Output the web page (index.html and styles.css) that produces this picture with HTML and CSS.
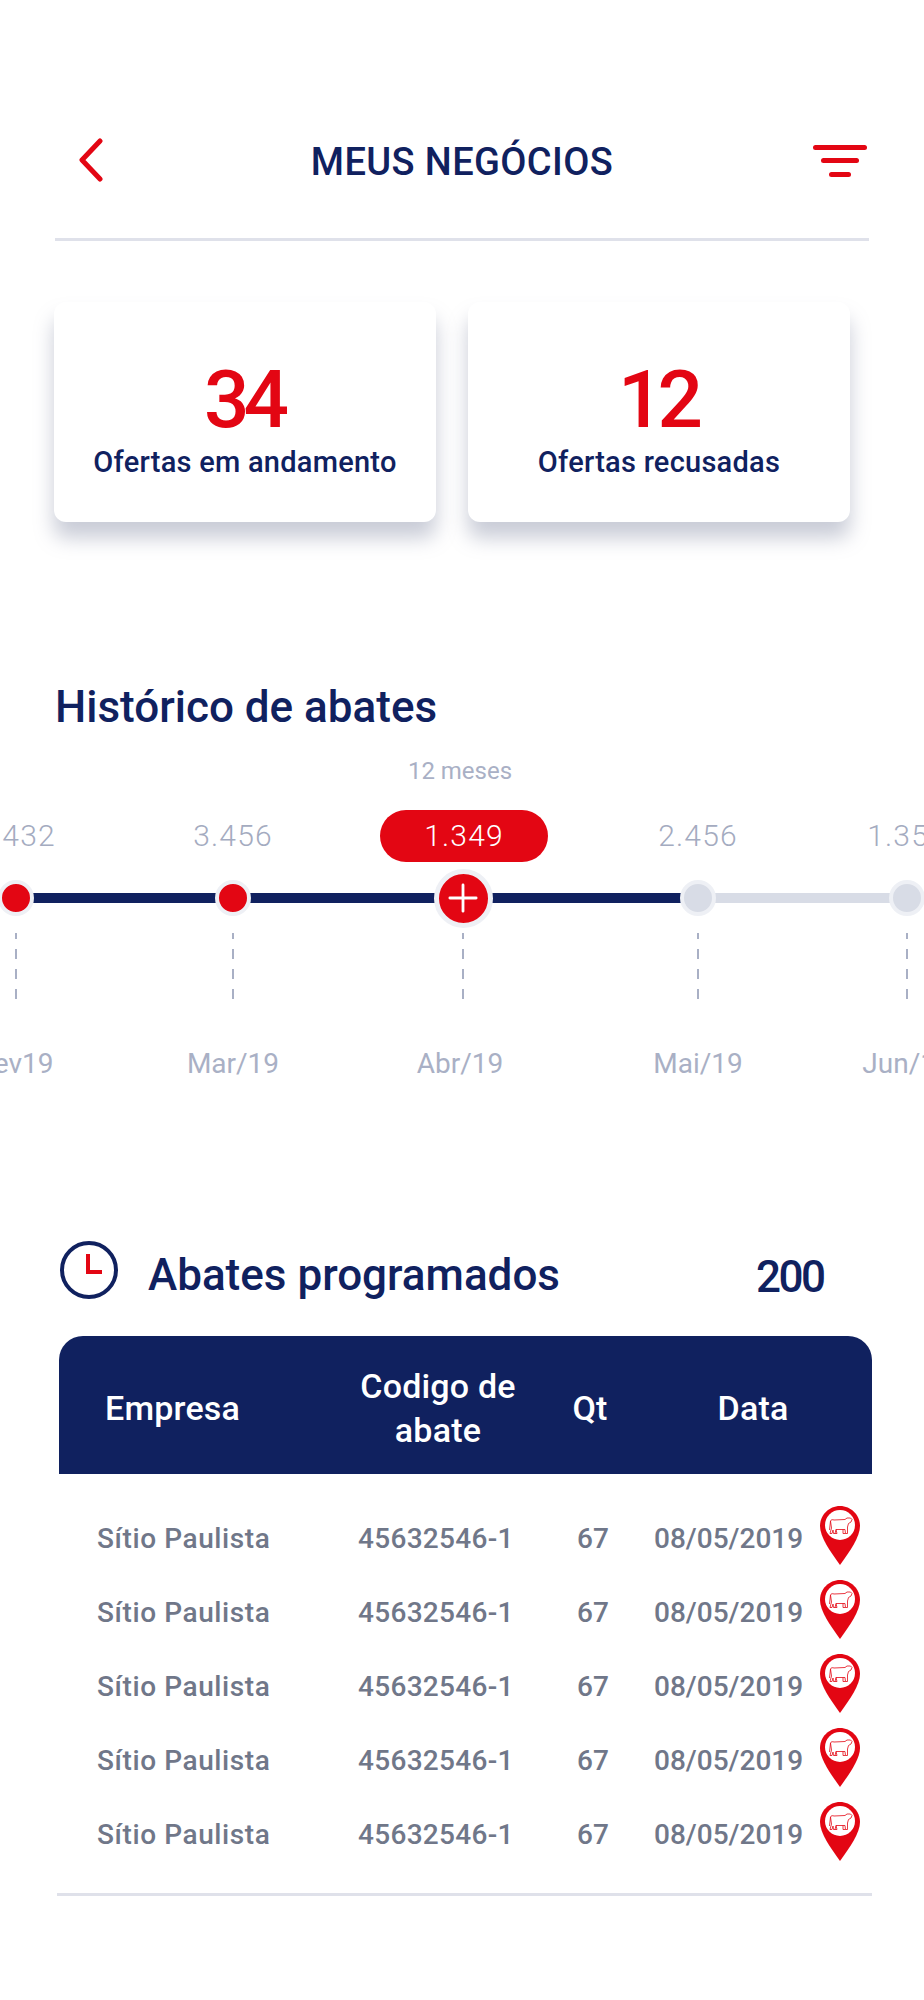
FILE: index.html
```html
<!DOCTYPE html>
<html>
    <head>
        <title>Meus negócios</title>
        <meta charset="utf-8">
        <link rel="stylesheet" href="styles.css">
    </head>
    <body>
        <div class="page">
            <div class="topbar">
                <svg class="back" viewBox="0 0 24 44"><path d="M21 3 L3 22 L21 41" /></svg>
                <div class="topbar-title">MEUS NEGÓCIOS</div>
                <svg class="filter" viewBox="0 0 54 33">
                    <rect x="0" y="0" width="54" height="5" rx="2.5" />
                    <rect x="8" y="13" width="38" height="5" rx="2.5" />
                    <rect x="16" y="27" width="22" height="5" rx="2.5" />
                </svg>
            </div>

            <div class="cards">
                <div class="card">
                    <div class="card-num">34</div>
                    <div class="card-label">Ofertas em andamento</div>
                </div>
                <div class="card">
                    <div class="card-num">12</div>
                    <div class="card-label">Ofertas recusadas</div>
                </div>
            </div>

            <h2 class="hist-title">Histórico de abates</h2>
            <div class="hist-sub">12 meses</div>

            <div class="timeline">
                <div class="stop done">
                    <div class="value">3.432</div>
                    <div class="node"><span class="dot"></span></div>
                    <div class="dash"></div>
                    <div class="month">Fev19</div>
                </div>
                <div class="stop done">
                    <div class="value">3.456</div>
                    <div class="node"><span class="dot"></span></div>
                    <div class="dash"></div>
                    <div class="month">Mar/19</div>
                </div>
                <div class="stop done current">
                    <div class="value"><span class="pill">1.349</span></div>
                    <div class="node">
                        <span class="dot big">
                            <svg viewBox="0 0 32 32"><path d="M2 16 H30 M16 2 V30" /></svg>
                        </span>
                    </div>
                    <div class="dash"></div>
                    <div class="month">Abr/19</div>
                </div>
                <div class="stop half">
                    <div class="value">2.456</div>
                    <div class="node"><span class="dot off"></span></div>
                    <div class="dash"></div>
                    <div class="month">Mai/19</div>
                </div>
                <div class="stop todo">
                    <div class="value">1.356</div>
                    <div class="node"><span class="dot off"></span></div>
                    <div class="dash"></div>
                    <div class="month">Jun/19</div>
                </div>
            </div>

            <div class="prog-head">
                <svg class="clock" viewBox="0 0 58 58">
                    <circle cx="29" cy="29" r="27" />
                    <path d="M28 13 V31 H42" />
                </svg>
                <div class="prog-title">Abates programados</div>
                <div class="prog-total">200</div>
            </div>

            <div class="table-head">
                <div>Empresa</div>
                <div class="center">Codigo de<br>abate</div>
                <div class="center">Qt</div>
                <div class="center">Data</div>
            </div>

            <div class="rows">
                <div class="row">
                    <div class="firm">Sítio Paulista</div><div class="code">45632546-1</div><div>67</div><div>08/05/2019</div>
                    <svg class="pin" viewBox="0 0 40 59"><use href="#pin" /></svg>
                </div>
                <div class="row">
                    <div class="firm">Sítio Paulista</div><div class="code">45632546-1</div><div>67</div><div>08/05/2019</div>
                    <svg class="pin" viewBox="0 0 40 59"><use href="#pin" /></svg>
                </div>
                <div class="row">
                    <div class="firm">Sítio Paulista</div><div class="code">45632546-1</div><div>67</div><div>08/05/2019</div>
                    <svg class="pin" viewBox="0 0 40 59"><use href="#pin" /></svg>
                </div>
                <div class="row">
                    <div class="firm">Sítio Paulista</div><div class="code">45632546-1</div><div>67</div><div>08/05/2019</div>
                    <svg class="pin" viewBox="0 0 40 59"><use href="#pin" /></svg>
                </div>
                <div class="row">
                    <div class="firm">Sítio Paulista</div><div class="code">45632546-1</div><div>67</div><div>08/05/2019</div>
                    <svg class="pin" viewBox="0 0 40 59"><use href="#pin" /></svg>
                </div>
            </div>
            <div class="bottom-rule"></div>
        </div>

        <!-- map pin with the cow, used by every row -->
        <svg class="defs" width="0" height="0">
            <symbol id="pin" viewBox="0 0 40 59">
                <path fill="#e30613" d="M20 0 C31 0 40 9 40 20 C40 31 30 45 20 59 C10 45 0 31 0 20 C0 9 9 0 20 0 Z" />
                <circle fill="#fff" cx="20" cy="19" r="15" />
                <path fill="none" stroke="#e30613" stroke-width="0.8" stroke-linejoin="round"
                    d="M10.500 15 C11 13.500 12.500 13.500 14 14 L25 13.500 L27 12 L30.500 12 L32 13.500 L31 16 L28.500 17.500 L27.500 21 L27.500 27.500 L25.500 27.500 L25 23.500 L16 23.500 L15 27.500 L13.500 27.500 L13 24 L12 27.500 L10 27.500 L11.500 22 Z M10.500 15 L9.500 24 M23 23.500 L23 27.500 L25.500 27.500 M16 23.500 L17 27.500 L15 27.500" />
            </symbol>
        </svg>
    </body>
</html>
```

FILE: styles.css
```css
body {
    margin: 0;
    background-color: #fff;
    font-family: "Roboto", "Liberation Sans", sans-serif;
    font-weight: 500;
}
.page {
    width: 924px;
    height: 2000px;
    overflow: hidden;
}
.defs {
    display: block;
}

/* top bar */
.topbar {
    display: flex;
    justify-content: space-between;
    align-items: flex-start;
    margin: 138px 55px 0 55px;
    padding: 0 2px 0 24px;
    height: 100px;
    border-bottom: 3px solid #dfe1ea;
}
.back {
    width: 24px;
    height: 44px;
    fill: none;
    stroke: #e30613;
    stroke-width: 5;
    stroke-linecap: round;
    stroke-linejoin: round;
}
.topbar-title {
    color: #10215f;
    font-size: 38px;
    line-height: 44px;
    letter-spacing: 0.4px;
    margin: 2px 0 0 8px;
}
.filter {
    width: 54px;
    height: 33px;
    margin-top: 7px;
    fill: #e30613;
}

/* cards */
.cards {
    display: flex;
    gap: 32px;
    margin: 61px 0 0 54px;
}
.card {
    width: 382px;
    height: 220px;
    box-sizing: border-box;
    padding-top: 58px;
    border-radius: 12px;
    background-color: #fff;
    text-align: center;
    box-shadow: 0 16px 20px rgba(120, 128, 155, 0.4);
}
.card-num {
    color: #e30613;
    font-size: 80px;
    line-height: 80px;
    letter-spacing: -6px;
    padding-right: 3px;
}
.card-label {
    color: #10215f;
    font-size: 29px;
    line-height: 34px;
    letter-spacing: 0.25px;
    margin-top: 5px;
}

/* historico */
.hist-title {
    color: #10215f;
    font-size: 44px;
    font-weight: 500;
    line-height: 50px;
    margin: 160px 0 0 55px;
}
.hist-sub {
    color: #a9b0c5;
    font-size: 24px;
    font-weight: 400;
    line-height: 28px;
    text-align: center;
    margin: 25px 0 0 -4px;
}
.timeline {
    display: grid;
    grid-template-columns: 200px 234px 226px 244px 174px;
    margin: 25px 0 0 -84px;
    width: 1008px;
}
.stop {
    display: flex;
    flex-direction: column;
    align-items: center;
}
.value {
    height: 52px;
    color: #a4abc0;
    font-size: 30px;
    font-weight: 300;
    line-height: 52px;
    letter-spacing: 1.2px;
}
.pill {
    display: block;
    width: 168px;
    height: 52px;
    margin-left: 2px;
    border-radius: 26px;
    background-color: #e30613;
    color: #fff;
    text-align: center;
}
.node {
    align-self: stretch;
    height: 58px;
    margin-top: 7px;
    display: flex;
    align-items: center;
    justify-content: center;
    background-position: center;
    background-size: 100% 10px;
    background-repeat: no-repeat;
}
.done .node {
    background-image: linear-gradient(#10215f, #10215f);
}
.half .node {
    background-image: linear-gradient(to right, #10215f 50%, #d8dce6 50%);
}
.todo .node {
    background-image: linear-gradient(#d8dce6, #d8dce6);
}
.dot {
    display: flex;
    align-items: center;
    justify-content: center;
    width: 28px;
    height: 28px;
    border: 4px solid #eef0f5;
    border-radius: 50%;
    background-color: #e30613;
}
.dot.off {
    background-color: #d8dce6;
}
.dot.big {
    width: 49px;
    height: 49px;
    border-width: 5px;
}
.dot.big svg {
    width: 30px;
    height: 30px;
    fill: none;
    stroke: #fff;
    stroke-width: 3;
    stroke-linecap: round;
}
.dash {
    width: 2px;
    height: 67px;
    margin-top: 6px;
    background-image: linear-gradient(#a9b0c5 50%, transparent 50%);
    background-size: 2px 20px;
    background-position: 0 -4px;
}
.month {
    color: #a9b0c5;
    font-size: 28px;
    font-weight: 400;
    line-height: 36px;
    margin-top: 46px;
}
.current .month {
    margin-right: 6px;
}

/* abates programados */
.prog-head {
    display: flex;
    align-items: center;
    margin: 158px 0 0 60px;
    height: 60px;
}
.clock {
    width: 58px;
    height: 58px;
    fill: none;
    stroke: #10215f;
    stroke-width: 4;
}
.clock path {
    stroke: #e30613;
}
.prog-title {
    width: 608px;
    margin-left: 30px;
    padding-top: 10px;
    color: #10215f;
    font-size: 44px;
}
.prog-total {
    padding-top: 14px;
    color: #10215f;
    font-size: 44px;
    letter-spacing: -2.5px;
}
.table-head {
    display: grid;
    grid-template-columns: 233px 200px 104px 222px;
    align-items: center;
    box-sizing: border-box;
    width: 813px;
    height: 138px;
    margin: 36px 0 0 59px;
    padding: 6px 0 0 46px;
    border-radius: 24px 24px 0 0;
    background-color: #10215f;
    color: #fff;
    font-size: 34px;
    line-height: 44px;
    letter-spacing: 0.2px;
}
.center {
    text-align: center;
}
.rows {
    margin: 27px 0 0 97px;
}
.row {
    display: grid;
    grid-template-columns: 261px 219px 77px 166px 40px;
    align-items: center;
    height: 74px;
    color: #707789;
    font-size: 28px;
}
.firm {
    letter-spacing: 0.6px;
}
.code {
    letter-spacing: 0.3px;
}
.pin {
    width: 40px;
    height: 59px;
    margin-bottom: 5px;
}
.bottom-rule {
    height: 3px;
    margin: 22px 52px 0 57px;
    background-color: #dfe1ea;
}
```
